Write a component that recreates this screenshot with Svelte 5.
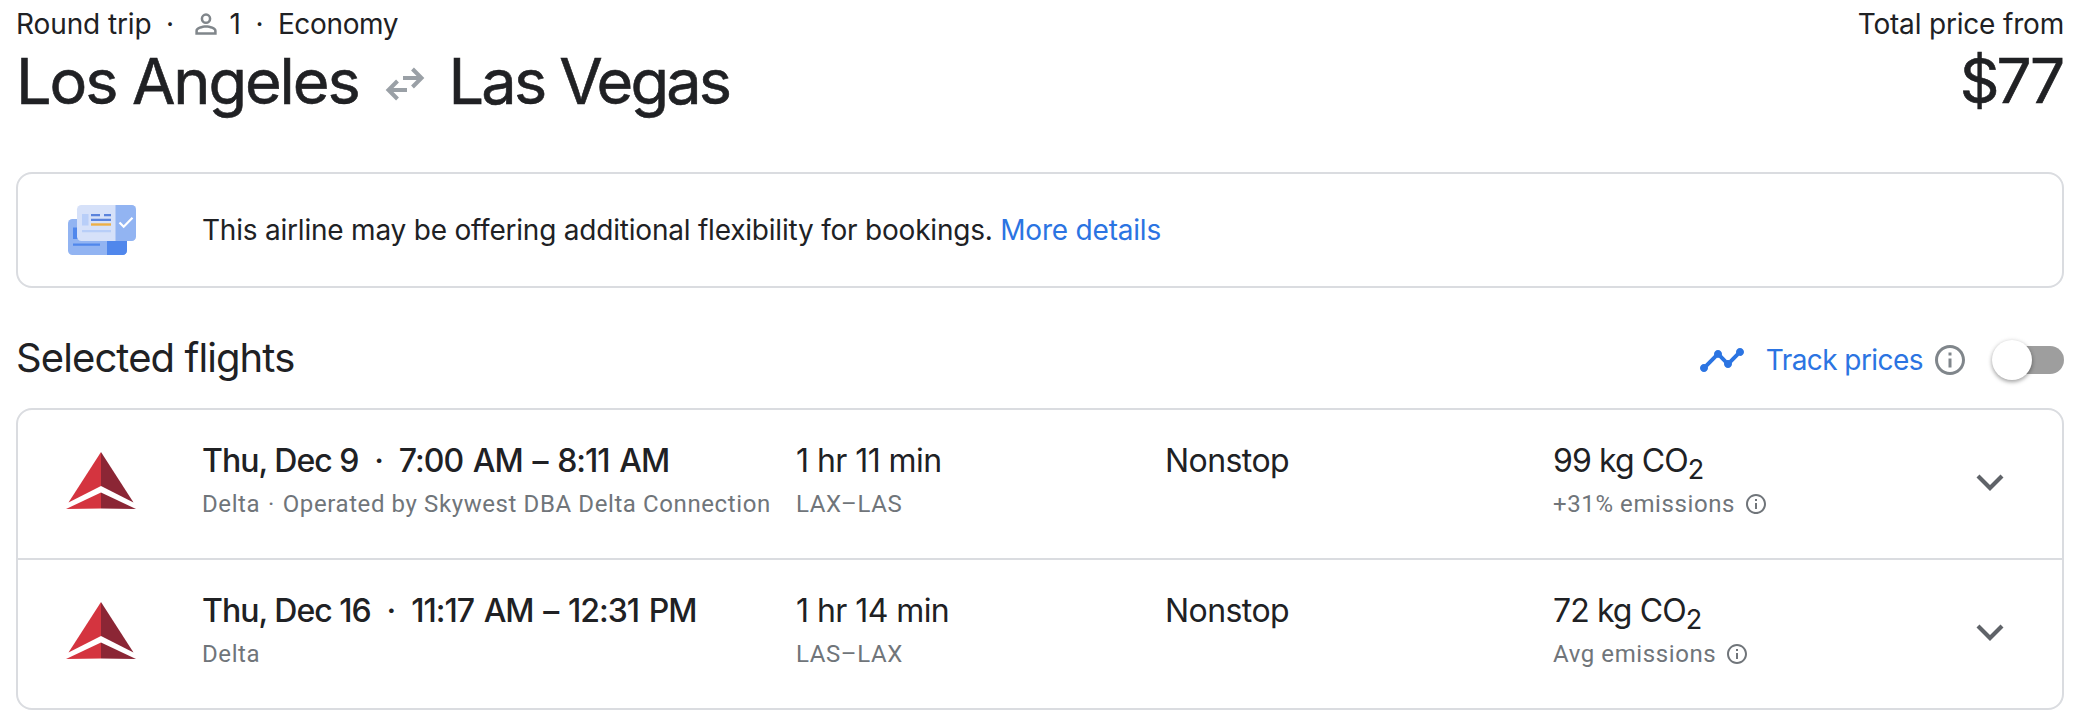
<script lang="ts">
    const flights = [
        {
            date: 'Thu, Dec 9',
            times: '7:00 AM – 8:11 AM',
            airline: 'Delta',
            operator: 'Operated by Skywest DBA Delta Connection',
            duration: '1 hr 11 min',
            route: 'LAX–LAS',
            stops: 'Nonstop',
            co2: '99 kg CO',
            emissions: '+31% emissions'
        },
        {
            date: 'Thu, Dec 16',
            times: '11:17 AM – 12:31 PM',
            airline: 'Delta',
            operator: '',
            duration: '1 hr 14 min',
            route: 'LAS–LAX',
            stops: 'Nonstop',
            co2: '72 kg CO',
            emissions: 'Avg emissions'
        }
    ];

    let tracking = $state(false);
</script>

{#snippet info(size: number)}
    <svg class="info" width={size} height={size} viewBox="0 0 24 24">
        <path d="M11 7h2v2h-2zm0 4h2v6h-2zm1-9C6.48 2 2 6.48 2 12s4.48 10 10 10 10-4.48 10-10S17.52 2 12 2zm0 18c-4.41 0-8-3.59-8-8s3.59-8 8-8 8 3.59 8 8-3.59 8-8 8z" />
    </svg>
{/snippet}

<main>
    <header>
        <div>
            <div class="meta">
                <span class="trip">Round trip</span>
                <span class="dot">·</span>
                <svg class="person" width="32" height="32" viewBox="0 0 24 24">
                    <path d="M12 5.9a2.1 2.1 0 1 1 0 4.2 2.1 2.1 0 0 1 0-4.2m0 9c2.97 0 6.1 1.46 6.1 2.1v1.1H5.9V17c0-.64 3.13-2.1 6.1-2.1M12 4a4 4 0 1 0 0 8 4 4 0 0 0 0-8zm0 9c-2.67 0-8 1.34-8 4v3h16v-3c0-2.66-5.33-4-8-4z" />
                </svg>
                <span class="count">1</span>
                <span class="dot">·</span>
                <span class="cabin">Economy</span>
            </div>
            <h1>
                <span class="from">Los Angeles</span>
                <svg width="40" height="34" viewBox="0 0 40 34">
                    <path d="M18 11h19M27.500 2l9 9-9 9M22 23H3M12.500 14l-9 9 9 9" />
                </svg>
                <span class="to">Las Vegas</span>
            </h1>
        </div>
        <div class="total">
            <div class="total-label">Total price from</div>
            <div class="price">$77</div>
        </div>
    </header>

    <section class="banner">
        <svg width="68" height="50" viewBox="0 0 68 50">
            <rect y="14" width="59" height="36" rx="4.500" fill="#92b4f2" />
            <path d="M39 14h15.500a4.500 4.500 0 0 1 4.500 4.500v27a4.500 4.500 0 0 1-4.500 4.500H39z" fill="#5087ec" />
            <path d="M5 22.500h6V34H5zM5 38.500h27v2.300H5z" fill="#5087ec" />
            <rect x="9" width="59" height="36" rx="4.500" fill="#d6e1f9" />
            <path d="M47.500 0h16A4.500 4.500 0 0 1 68 4.500v27a4.500 4.500 0 0 1-4.500 4.500h-16z" fill="#92b4f2" />
            <path d="M14 9h6.500v11.500H14zM14 25h29v2.200H14z" fill="#b8cef8" />
            <path d="M23 9h9v2.200h-9zM36 9h7v2.200h-7zM23 13.800h20v2.200H23z" fill="#5a83dc" />
            <path d="M23 18.300h20v2.400H23z" fill="#edaf45" />
            <path d="M51.500 17.500l4.200 4.200 8.800-8.900" fill="none" stroke="#fff" stroke-width="2.200" />
        </svg>
        <p>This airline may be offering additional flexibility for bookings. <a href="#details">More details</a></p>
    </section>

    <div class="toolbar">
        <h2>Selected flights</h2>
        <div class="track">
            <svg class="chart" width="48" height="48" viewBox="0 0 24 24">
                <path d="M23 8c0 1.100-.9 2-2 2-.18 0-.35-.02-.51-.07l-3.560 3.550c.05.16.07.34.07.520 0 1.100-.9 2-2 2s-2-.9-2-2c0-.18.02-.36.07-.52l-2.550-2.550c-.16.05-.34.07-.52.07s-.36-.02-.52-.07l-4.550 4.560c.05.16.07.33.07.510 0 1.100-.9 2-2 2s-2-.9-2-2 .9-2 2-2c.18 0 .35.02.510.070l4.560-4.550C8.020 9.360 8 9.180 8 9c0-1.100.9-2 2-2s2 .9 2 2c0 .18-.02.36-.07.520l2.550 2.550c.16-.05.34-.07.52-.07s.36.02.52.07l3.550-3.560C19.020 8.350 19 8.180 19 8c0-1.100.9-2 2-2s2 .9 2 2z" />
            </svg>
            <span class="track-label">Track prices</span>
            {@render info(36)}
            <button
                class="toggle"
                class:on={tracking}
                aria-label="Track prices"
                onclick={() => (tracking = !tracking)}
            >
                <span class="knob"></span>
            </button>
        </div>
    </div>

    <section class="flights">
        {#each flights as flight}
            <div class="flight">
                <svg class="logo" width="70" height="57" viewBox="0 0 70 57">
                    <path d="M35 0v34L2.500 50.500z" fill="#d4343f" />
                    <path d="M35 0v34l32.500 16.500z" fill="#8b2635" />
                    <path d="M35 40.500V56.500L0 57z" fill="#d4343f" />
                    <path d="M35 40.500V56.500L70 57z" fill="#8b2635" />
                </svg>
                <div>
                    <div class="title when">
                        <span>{flight.date}</span><span class="sep">·</span><span class="times">{flight.times}</span>
                    </div>
                    <div class="sub">
                        <span>{flight.airline}</span>
                        {#if flight.operator}
                            <span class="sub-dot">·</span>
                            <span>{flight.operator}</span>
                        {/if}
                    </div>
                </div>
                <div>
                    <div class="title duration">{flight.duration}</div>
                    <div class="sub">{flight.route}</div>
                </div>
                <div>
                    <div class="title stops">{flight.stops}</div>
                </div>
                <div>
                    <div class="title co2">{flight.co2}<sub>2</sub></div>
                    <div class="sub">{flight.emissions}{@render info(24)}</div>
                </div>
                <svg class="chevron" width="28" height="18" viewBox="0 0 28 18">
                    <path d="M2 2l12 12L26 2" />
                </svg>
            </div>
        {/each}
    </section>
</main>

<style>
    :global(body) {
        background: #fff;
    }

    main {
        box-sizing: border-box;
        width: 2094px;
        height: 724px;
        padding: 0 30px 0 16px;
        overflow: hidden;
        font-family: Inter, "Liberation Sans", sans-serif;
        font-size: 28px;
        letter-spacing: -0.02em;
        color: #202124;
    }

    h1,
    h2,
    p {
        margin: 0;
        font-weight: 400;
    }

    header {
        display: flex;
        justify-content: space-between;
        height: 114px;
    }

    .meta {
        display: flex;
        align-items: center;
        height: 48px;
        letter-spacing: -0.1px;
    }

    .dot {
        width: 37px;
        text-align: center;
    }

    .person {
        margin-left: 1px;
        fill: #80868b;
    }

    .count {
        margin-left: 8px;
    }

    .cabin {
        letter-spacing: -0.35px;
    }

    h1 {
        display: flex;
        align-items: center;
        height: 66px;
        font-size: 63px;
        line-height: 66px;
        -webkit-text-stroke: 0.6px #202124;

        & svg {
            margin: 6px 24px 0 26px;
            fill: none;
            stroke: #9aa0a6;
            stroke-width: 4;
        }
    }

    .from {
        letter-spacing: -2.1px;
    }

    .to {
        letter-spacing: -2.85px;
    }

    .total {
        text-align: right;
    }

    .total-label {
        line-height: 48px;
        letter-spacing: -0.18px;
    }

    .price {
        padding-right: 2px;
        font-size: 62px;
        line-height: 66px;
        letter-spacing: -3px;
        -webkit-text-stroke: 0.6px #202124;
    }

    .banner {
        display: flex;
        align-items: center;
        box-sizing: border-box;
        height: 116px;
        margin-top: 58px;
        padding-left: 50px;
        border: 2px solid #dadce0;
        border-radius: 16px;

        & p {
            margin-left: 66px;
            letter-spacing: -0.21px;
        }
    }

    a {
        color: #2b74e2;
        text-decoration: none;
    }

    .toolbar {
        display: flex;
        align-items: center;
        justify-content: space-between;
        height: 96px;
        padding-top: 24px;
    }

    h2 {
        padding-bottom: 5px;
        font-size: 40px;
        letter-spacing: -0.9px;
    }

    .track {
        display: flex;
        align-items: center;
    }

    .chart {
        fill: #2b74e2;
    }

    .track-label {
        margin: 0 9px 0 20px;
        color: #2b74e2;
    }

    .info {
        fill: #80868b;
    }

    .toggle {
        display: flex;
        align-items: center;
        width: 72px;
        height: 28px;
        margin-left: 24px;
        padding: 0;
        border: 0;
        border-radius: 14px;
        background: linear-gradient(90deg, transparent 20px, #9e9e9e 20px);

        &.on {
            justify-content: flex-end;
            background: #8ab4f8;
        }
    }

    .knob {
        width: 40px;
        height: 40px;
        border-radius: 50%;
        background: #fff;
        box-shadow: 0 2px 4px rgba(0, 0, 0, 0.34), 0 0 5px rgba(0, 0, 0, 0.08);
    }

    .flights {
        border: 2px solid #dadce0;
        border-radius: 16px;
    }

    .flight {
        display: grid;
        grid-template-columns: 184px 594px 369px 388px 423px 1fr;
        align-items: start;
        box-sizing: border-box;
        height: 148px;
        padding-top: 28px;

        & + .flight {
            height: 150px;
            border-top: 2px solid #dadce0;
        }
    }

    .logo {
        margin: 14px 0 0 48px;
    }

    .title {
        height: 45px;
        margin-bottom: 5px;
        font-size: 32px;
        line-height: 46px;
        white-space: nowrap;
    }

    .when {
        font-weight: 550;
        letter-spacing: -1px;
    }

    .times {
        letter-spacing: -1px;
        word-spacing: 2.2px;
    }

    .sep {
        display: inline-block;
        width: 40.5px;
        text-align: center;
    }

    .co2 {
        letter-spacing: -0.9px;
    }

    sub {
        font-size: 27px;
        line-height: 0;
    }

    .sub {
        display: flex;
        align-items: center;
        height: 32px;
        font-family: Roboto, sans-serif;
        font-size: 24px;
        letter-spacing: 0.6px;
        color: #70757a;
        white-space: nowrap;

        & .info {
            margin-left: 9px;
            fill: #70757a;
        }
    }

    .sub-dot {
        width: 22.5px;
        text-align: center;
    }

    .chevron {
        margin-top: 36px;
        fill: none;
        stroke: #5f6368;
        stroke-width: 4.200;
    }
</style>
